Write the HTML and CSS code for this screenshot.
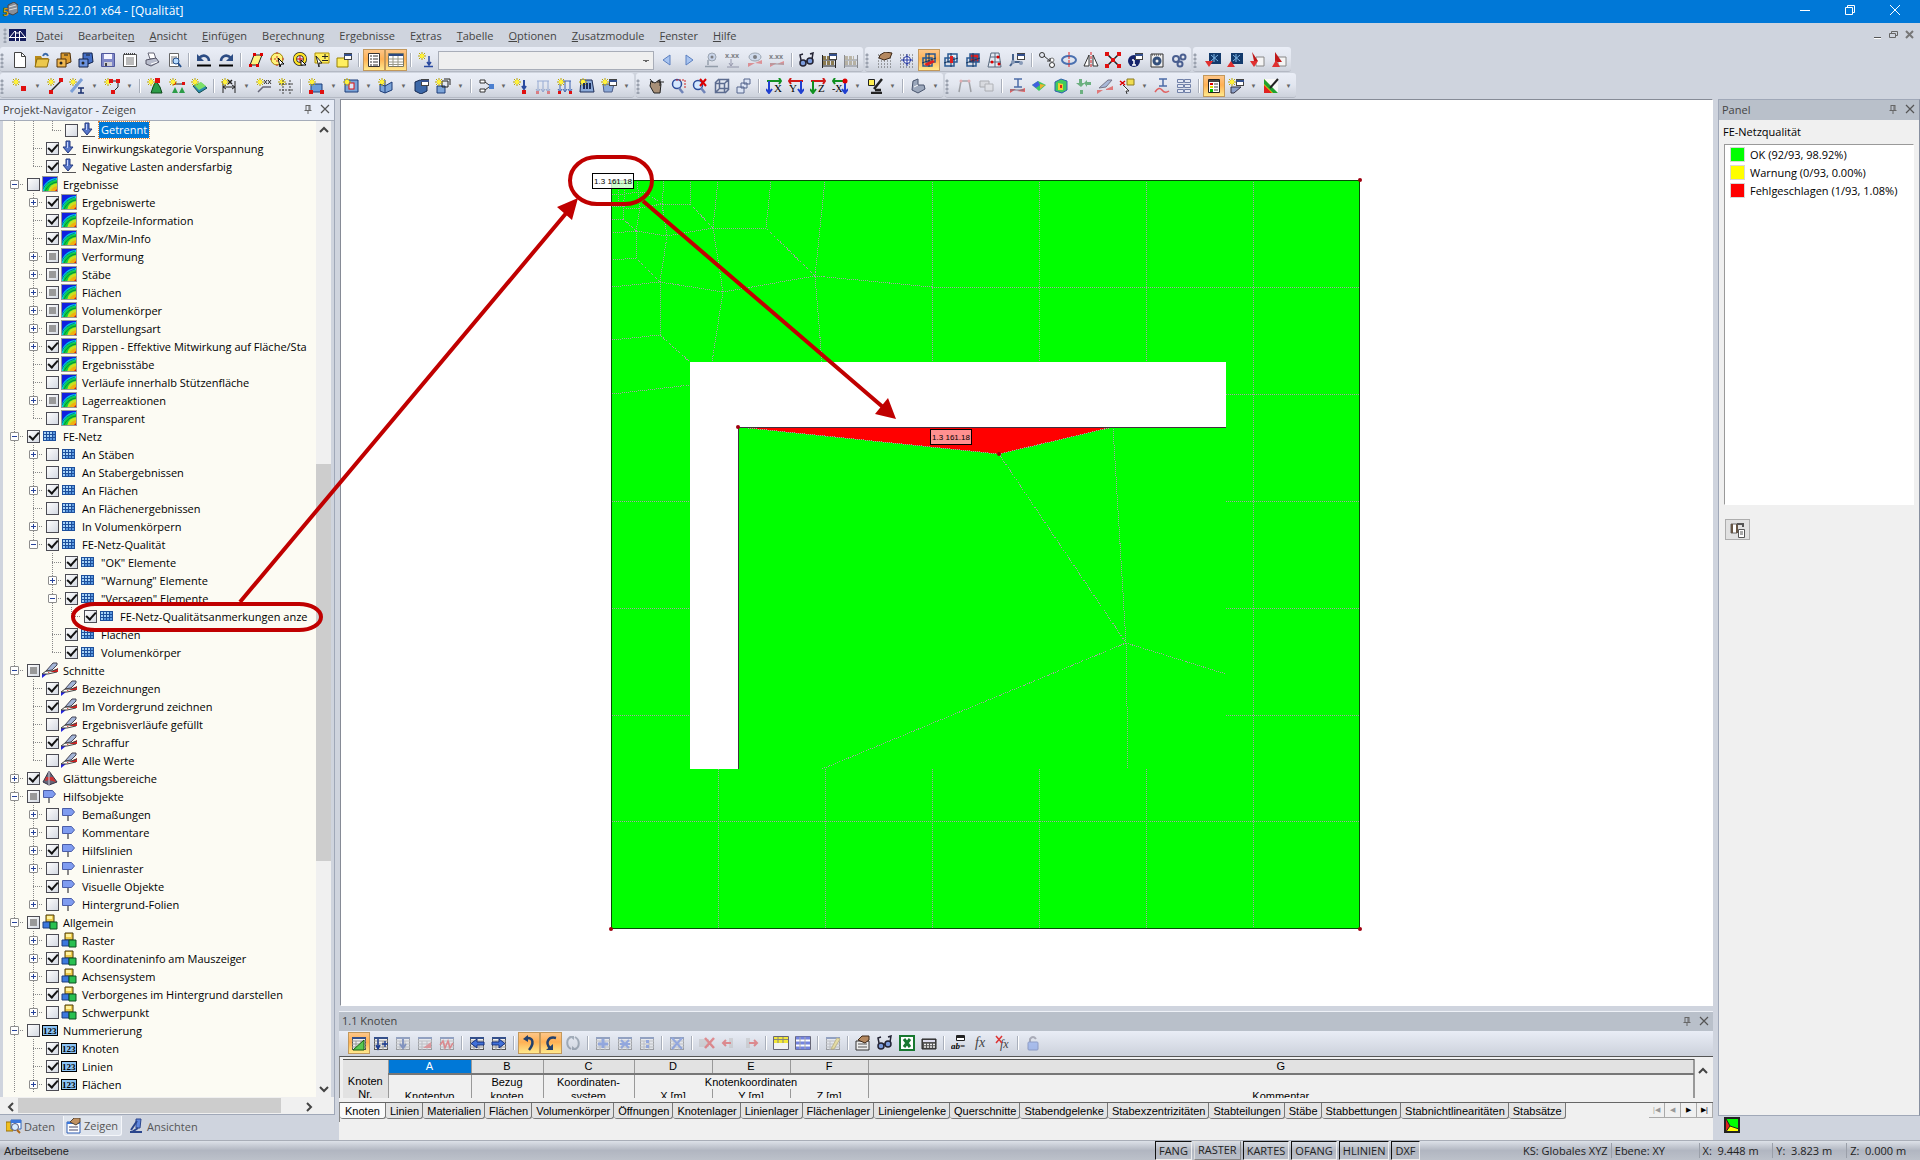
FILE: index.html
```html
<!DOCTYPE html>
<html lang="de">
<head>
    <meta charset="UTF-8">
    <meta name="viewport" content="width=device-width, initial-scale=1.0">
    <title>RFEM 5.22.01 x64 - [Qualität]</title>
    <link rel="stylesheet" href="styles.css">
</head>
<body>
    <div class="app">
        <header class="titlebar">
            <span data-icon="app"></span>
            <h1>RFEM 5.22.01 x64 - [Qualität]</h1>
            <div class="window-buttons">
                <button aria-label="Minimieren"><svg width="12" height="12"><path d="M1 6.500h10" stroke="#fff"/></svg></button>
                <button aria-label="Wiederherstellen"><svg width="12" height="12" fill="none" stroke="#fff"><path d="M1.500 3.500h7v7h-7zM3.500 3.500v-2h7v7h-2"/></svg></button>
                <button aria-label="Schließen"><svg width="12" height="12"><path d="M1 1l10 10M11 1L1 11" stroke="#fff"/></svg></button>
            </div>
        </header>

        <nav class="menubar">
            <i class="grip"></i>
            <svg class="doc-logo" width="17" height="12"><rect width="17" height="12" fill="#141c5c"/><path d="M0 8.500h17M6.500 2v10M10.500 2v10M6 2L1 8M11 2l5 6M6 4h5" stroke="#fff" fill="none"/></svg>
            <a href="#"><u>D</u>atei</a>
            <a href="#">Bearbeite<u>n</u></a>
            <a href="#"><u>A</u>nsicht</a>
            <a href="#"><u>E</u>infügen</a>
            <a href="#">Be<u>r</u>echnung</a>
            <a href="#">Er<u>g</u>ebnisse</a>
            <a href="#">E<u>x</u>tras</a>
            <a href="#"><u>T</u>abelle</a>
            <a href="#"><u>O</u>ptionen</a>
            <a href="#"><u>Z</u>usatzmodule</a>
            <a href="#"><u>F</u>enster</a>
            <a href="#"><u>H</u>ilfe</a>
            <div class="mdi-buttons">
                <button aria-label="Fenster minimieren"><svg width="10" height="10"><path d="M1 7.500h7" stroke="#555"/><path d="M1 8.500h7" stroke="#fff"/></svg></button>
                <button aria-label="Fenster wiederherstellen"><svg width="10" height="10" fill="none" stroke="#666"><path d="M.5 3.500h6v4h-6zM2.500 3V1.500h6v4H7"/></svg></button>
                <button aria-label="Fenster schließen"><svg width="10" height="10"><path d="M1 1l7 7M8 1L1 8" stroke="#777" stroke-width="2"/></svg></button>
            </div>
        </nav>

        <div class="toolbar-row" id="toolbarTop"></div>
        <div class="toolbar-row" id="toolbarBottom"></div>

        <main class="workspace">
            <aside class="navigator">
                <div class="pane">
                    <div class="pane-title active">
                        <h2>Projekt-Navigator - Zeigen</h2>
                        <button aria-label="Anheften" data-icon="pin"></button>
                        <button aria-label="Schließen" data-icon="close"></button>
                    </div>
                    <div class="tree-area">
                        <div class="tree" id="tree"></div>
                        <div class="scroll-v">
                            <button aria-label="Nach oben" data-icon="up"></button>
                            <div class="track"><i class="thumb"></i></div>
                            <button aria-label="Nach unten" data-icon="down"></button>
                        </div>
                    </div>
                    <div class="scroll-h">
                        <button aria-label="Nach links" data-icon="left"></button>
                        <div class="track"><i class="thumb"></i></div>
                        <button aria-label="Nach rechts" data-icon="right"></button>
                    </div>
                </div>
                <div class="nav-tabs">
                    <button><span data-icon="tabData"></span>Daten</button>
                    <button class="selected"><span data-icon="tabShow"></span>Zeigen</button>
                    <button><span data-icon="tabViews"></span>Ansichten</button>
                </div>
            </aside>

            <section class="center">
                <div class="model-view">
                    <svg viewBox="341 100 1371 906" preserveAspectRatio="xMinYMin meet">
                        <rect x="611.5" y="180.500" width="748" height="748" fill="#0f0"/>
                        <path d="M690 362h536v65H738v342h-48z" fill="#fff"/>
                        <path d="M738 427h375l-114 27z" fill="#f00"/>
                        <g class="mesh">
                            <path d="M1253 180v748M1146 180v182M1039 180v182M932 180v182M612 821h748"/>
                            <path d="M718 769v159M825 769v159M932 769v159M1039 769v159M1146 769v159"/>
                            <path d="M612 501h78M612 608h78M612 715h78M612 394l78-9"/>
                            <path d="M1226 394h134M1226 501h134M1226 608h134M1226 715h134M932 287h428"/>
                            <path d="M932 287l-117-11l-92 16l-63-10l-48 5M825 180l-10 96l7 86M815 276l-49-48l5-48M766 228h-53l5-48M713 228l-23-24l1-24M690 204h-28l2-24"/>
                            <path d="M713 228l-46 8l-31-5l-24 2M713 228l10 64l-11 70M660 282v53l-48 5M660 335l30 27M660 282l-24-24l-24 2M636 258v-27M660 282l7-46l-5-32l-22 4l-3-28M636 231l4-23h-15M636 231l-13-12h-11M623 219l2-39M612 194h13l12-2h8l17 12M618 180v25M612 206h13"/>
                            <path d="M738 427l261 27l114-27l13 216l2 126M999 454l127 189l100 31M1126 643L822 769"/>
                        </g>
                        <rect x="611.5" y="180.500" width="748" height="748" fill="none" stroke="#074a07"/>
                        <path d="M1226 427.500H738.500V769" fill="none" stroke="#403040"/>
                        <g fill="#a00010">
                            <circle cx="1360" cy="180" r="2"/><circle cx="611" cy="929" r="2"/><circle cx="1360" cy="929" r="2"/>
                            <circle cx="738" cy="427" r="2"/><circle cx="999" cy="454" r="2"/>
                        </g>
                        <g class="mesh-note">
                            <rect x="592.5" y="173.500" width="41" height="15" fill="#fff" fill-opacity=".8"/>
                            <text x="613" y="184">1.3 161.18</text>
                            <rect x="930.5" y="429.500" width="41" height="15" fill="#ff9090"/>
                            <text x="951" y="440">1.3 161.18</text>
                        </g>
                    </svg>
                </div>

                <div class="table-pane">
                    <div class="pane-title">
                        <h2>1.1 Knoten</h2>
                        <button aria-label="Anheften" data-icon="pin"></button>
                        <button aria-label="Schließen" data-icon="close"></button>
                    </div>
                    <div class="table-tools" id="tableTools"></div>
                    <div class="grid-wrap">
                        <div class="grid-clip">
                            <table>
                                <colgroup>
                                    <col class="w-num"><col class="w-a"><col class="w-b"><col class="w-c"><col class="w-d"><col class="w-d"><col class="w-d"><col>
                                </colgroup>
                                <tr class="letters"><th rowspan="3" class="corner">Knoten<br>Nr.</th><th class="current">A</th><th>B</th><th>C</th><th>D</th><th>E</th><th>F</th><th>G</th></tr>
                                <tr class="heads"><td></td><td>Bezug</td><td>Koordinaten-</td><td colspan="3">Knotenkoordinaten</td><td></td></tr>
                                <tr class="heads"><td>Knotentyp</td><td>knoten</td><td>system</td><td>X [m]</td><td>Y [m]</td><td>Z [m]</td><td>Kommentar</td></tr>
                            </table>
                        </div>
                        <div class="grid-scroll"><button aria-label="Nach oben" data-icon="up"></button></div>
                    </div>
                    <div class="sheet-tabs">
                        <button class="selected">Knoten</button>
                        <button>Linien</button>
                        <button>Materialien</button>
                        <button>Flächen</button>
                        <button>Volumenkörper</button>
                        <button>Öffnungen</button>
                        <button>Knotenlager</button>
                        <button>Linienlager</button>
                        <button>Flächenlager</button>
                        <button>Liniengelenke</button>
                        <button>Querschnitte</button>
                        <button>Stabendgelenke</button>
                        <button>Stabexzentrizitäten</button>
                        <button>Stabteilungen</button>
                        <button>Stäbe</button>
                        <button>Stabbettungen</button>
                        <button>Stabnichtlinearitäten</button>
                        <button>Stabsätze</button>
                        <div class="sheet-nav">
                            <button disabled aria-label="Erste">|◀</button>
                            <button disabled aria-label="Vorherige">◀</button>
                            <button aria-label="Nächste">▶</button>
                            <button aria-label="Letzte">▶|</button>
                        </div>
                    </div>
                </div>
            </section>

            <aside class="panel">
                <div class="pane">
                    <div class="pane-title">
                        <h2>Panel</h2>
                        <button aria-label="Anheften" data-icon="pin"></button>
                        <button aria-label="Schließen" data-icon="close"></button>
                    </div>
                    <h3>FE-Netzqualität</h3>
                    <ul class="legend">
                        <li><i class="ok"></i>OK (92/93, 98.92%)</li>
                        <li><i class="warn"></i>Warnung (0/93, 0.00%)</li>
                        <li><i class="fail"></i>Fehlgeschlagen (1/93, 1.08%)</li>
                    </ul>
                    <button class="panel-option" aria-label="Optionen" data-icon="panelOption"></button>
                </div>
                <div class="panel-tabs"><button aria-label="Farbskala" data-icon="panelTab"></button></div>
            </aside>
        </main>

        <footer class="statusbar">
            <span class="message">Arbeitsebene</span>
            <div class="toggles">
                <button aria-pressed="true">FANG</button>
                <button aria-pressed="false">RASTER</button>
                <button aria-pressed="true">KARTES</button>
                <button aria-pressed="true">OFANG</button>
                <button aria-pressed="true">HLINIEN</button>
                <button aria-pressed="true">DXF</button>
            </div>
            <div class="coords">
                <span class="system">KS: Globales XYZ</span>
                <span class="level">Ebene: XY</span>
                <span>X: &nbsp;9.448 m</span>
                <span>Y: &nbsp;3.823 m</span>
                <span>Z: &nbsp;0.000 m</span>
            </div>
        </footer>

        <!-- callout running across navigator and model view -->
        <svg class="callout" width="1920" height="1160">
            <g fill="none" stroke="#c00000" stroke-width="4">
                <rect x="570" y="157" width="82" height="47" rx="27"/>
                <rect x="73" y="604" width="248" height="26" rx="22"/>
                <path d="M240 602L568 211M643 201L884 408"/>
            </g>
            <path d="M578 198l-6 22l-15-13zM896 419l-21-5l13-16z" fill="#c00000"/>
        </svg>
    </div>
    <script src="script.js"></script>
</body>
</html>
```
FILE: styles.css
```css
* {
    box-sizing: border-box;
}
body {
    margin: 0;
    background: #cfd4de;
    color: #000;
    font: 11px "Open Sans", sans-serif;
}
button {
    margin: 0;
    padding: 0;
    border: none;
    background: none;
    color: inherit;
    font: inherit;
}
h1, h2, h3 {
    margin: 0;
    font: inherit;
}
svg {
    display: block;
    flex: none;
}
.app {
    position: relative;
    display: flex;
    flex-direction: column;
    height: 100vh;
    overflow: hidden;
}

/* title and menu */
.titlebar {
    display: flex;
    align-items: center;
    gap: 5px;
    height: 23px;
    padding: 0 19px 3px 2px;
    background: #0078d7;
    color: #fff;
    font-size: 12px;
}
.window-buttons {
    display: flex;
    gap: 33px;
    margin-left: auto;
}
.menubar {
    display: flex;
    align-items: center;
    height: 24px;
    padding: 0 5px 0 3px;
    color: #444;
}
.menubar a {
    margin-right: 15px;
    color: inherit;
    text-decoration: none;
}
.menubar .grip {
    width: 6px;
}
.doc-logo {
    margin-right: 10px;
}
.mdi-buttons {
    display: flex;
    gap: 6px;
    margin-left: auto;
}

/* toolbars */
.grip {
    width: 9px;
    height: 15px;
    flex: none;
    background: radial-gradient(circle at 2px 2px, #9aa1ae 1px, transparent 2px) 0 0 / 9px 4px;
}
.toolbar-row {
    display: flex;
    gap: 2px;
    height: 26px;
    padding-bottom: 1px;
}
.toolbar {
    display: flex;
    align-items: center;
    padding: 2px 1px 0 0;
    border-radius: 3px;
    background: linear-gradient(#eaeef7, #e2e6ef 50%, #cdd2dc);
    border-bottom: 1px solid #b4b9c4;
}
.tool {
    display: flex;
    align-items: center;
    justify-content: center;
    width: 22px;
    height: 22px;
}
.tool.on {
    border: 1px solid #c2985c;
    background: linear-gradient(#fdc688, #ffb054 45%, #ffe98c);
}
.tool:disabled svg {
    opacity: .45;
}
.drop {
    width: 13px;
    height: 22px;
    color: #666;
    font-size: 6px;
}
.sep {
    width: 2px;
    height: 14px;
    margin: 0 3px;
    background: linear-gradient(90deg, #a9afbb 50%, #fff 50%);
}
.case-select {
    width: 216px;
    height: 19px;
    margin: 0 2px 0 1px;
    border: 1px solid #a8adb8;
    border-radius: 0;
    appearance: none;
    background: linear-gradient(45deg, transparent 50%, #666 50%) right 7px top 8px / 3px 3px no-repeat, linear-gradient(-45deg, transparent 50%, #666 50%) right 4px top 8px / 3px 3px no-repeat, #efefef;
}

/* panes */
.workspace {
    display: flex;
    flex: 1;
    min-height: 0;
}
.pane-title {
    display: flex;
    align-items: center;
    gap: 1px;
    height: 20px;
    padding: 0 1px 2px 3px;
    background: #b9c0ca;
    color: #444;
}
.pane-title h2 {
    flex: 1;
}
.pane-title.active {
    background: #e8edf7;
    height: 21px;
    border-bottom: 1px solid #a5acb9;
}
.navigator {
    display: flex;
    flex-direction: column;
    width: 335px;
}
.navigator .pane {
    display: flex;
    flex-direction: column;
    flex: 1;
    min-height: 0;
    border: 1px solid #a0a8b8;
    border-left: none;
}
.tree-area {
    display: flex;
    flex: 1;
    min-height: 0;
    margin-left: 3px;
}
.tree {
    flex: 1;
    min-width: 0;
    padding-left: 2px;
    overflow: hidden;
    background: #fcfbf3;
}
.scroll-v {
    display: flex;
    flex-direction: column;
    width: 15px;
    margin-right: 3px;
    background: #f0f0f0;
}
.scroll-v button, .scroll-h button {
    display: flex;
    align-items: center;
    justify-content: center;
    width: 15px;
    height: 17px;
}
.scroll-v .track {
    display: grid;
    grid-template-rows: 326fr 396fr 219fr;
    flex: 1;
}
.scroll-v .thumb {
    grid-row: 2;
    background: #cdcdcd;
}
.scroll-h {
    display: flex;
    height: 17px;
    padding: 1px 18px 1px 3px;
    background: #f0f0f0;
}
.scroll-h .track {
    display: grid;
    grid-template-columns: 258fr 20fr;
    flex: 1;
}
.scroll-h .thumb {
    background: #cdcdcd;
}
.row {
    display: flex;
    align-items: center;
    height: 18px;
    white-space: nowrap;
}
.guide {
    display: flex;
    align-items: center;
    justify-content: center;
    flex: none;
    width: 19px;
    height: 18px;
}
.guide.line {
    background: repeating-linear-gradient(#888 0 1px, transparent 1px 2px) 9px 0 / 1px 18px no-repeat;
}
.guide.branch {
    background:
        repeating-linear-gradient(#888 0 1px, transparent 1px 2px) 9px 0 / 1px 18px no-repeat,
        repeating-linear-gradient(90deg, #888 0 1px, transparent 1px 2px) 9px 9px / 10px 1px no-repeat;
}
.guide.branch.last {
    background-size: 1px 9px, 10px 1px;
}
.expander {
    width: 9px;
    height: 9px;
    border: 1px solid #8d8d8d;
    border-radius: 1px;
    background: linear-gradient(#26429a, #26429a) center / 5px 1px no-repeat, #fff;
}
.expander.plus {
    background: linear-gradient(#26429a, #26429a) center / 5px 1px no-repeat, linear-gradient(#26429a, #26429a) center / 1px 5px no-repeat, #fff;
}
.row label {
    display: flex;
    align-items: center;
    padding-left: 3px;
}
.row input {
    display: grid;
    place-items: center;
    width: 13px;
    height: 13px;
    margin: 0 2px 0 0;
    border: 1px solid #4c4c54;
    appearance: none;
    background: linear-gradient(135deg, #fdfdfd, #d5dae3);
}
.row input:checked::after {
    content: "";
    width: 8px;
    height: 4px;
    margin-bottom: 2px;
    border: solid #111;
    border-width: 0 0 2px 2px;
    transform: rotate(-48deg);
}
.row input.mixed::after {
    content: "";
    width: 7px;
    height: 7px;
    background: #999;
}
.row .caption {
    margin-left: 3px;
    padding: 0 2px;
}
.row .caption.selected {
    outline: 1px dotted #e08030;
    background: #0078d7;
    color: #fff;
    line-height: 16px;
}
.nav-tabs {
    display: flex;
    align-items: center;
    height: 25px;
    padding: 0 4px 3px;
    gap: 5px;
    color: #555;
}
.nav-tabs button {
    display: flex;
    align-items: center;
    gap: 2px;
    height: 20px;
    padding: 0 3px 0 2px;
}
.nav-tabs .selected {
    border: 1px solid #f4f6fa;
    border-top: none;
    border-radius: 0 0 3px 3px;
    background: #dfe4ec;
}

/* center column */
.center {
    display: flex;
    flex-direction: column;
    flex: 1;
    min-width: 0;
    padding: 0 5px 0 4px;
}
.model-view {
    flex: 1;
    min-height: 0;
    margin-left: 1px;
    border: 1px solid #868b96;
    border-right-color: #fff;
    border-bottom-color: #fff;
    background: #fff;
    overflow: hidden;
}
.model-view svg {
    width: 100%;
}
.mesh {
    fill: none;
    stroke: #a8a0a8;
    stroke-dasharray: 1 1;
    shape-rendering: crispEdges;
}
.mesh-note rect {
    stroke: #000;
}
.mesh-note text {
    font: 8px "Liberation Sans", sans-serif;
    text-anchor: middle;
}
.table-pane {
    height: 129px;
    margin-top: 5px;
    background: #f0f0f0;
    font-family: "Liberation Sans", sans-serif;
    font-size: 11px;
}
.table-pane .pane-title {
    border-top: 1px solid #eef1f7;
    font-family: "Open Sans", sans-serif;
}
.table-tools {
    display: flex;
    align-items: center;
    height: 25px;
    padding: 0 0 1px 9px;
    background: linear-gradient(#e9edf6, #ccd1db);
}
.grid-wrap {
    display: flex;
    height: 42px;
    padding: 2px 2px 0 3px;
    border-top: 1px solid #555;
    border-left: 1px solid #888;
}
.grid-clip {
    flex: 1;
    overflow: hidden;
    border-top: 1px solid #555;
}
.grid-clip table {
    width: 100%;
    border-collapse: collapse;
    table-layout: fixed;
    text-align: center;
}
.w-num { width: 45px; }
.w-a { width: 83px; }
.w-b { width: 72px; }
.w-c { width: 91px; }
.w-d { width: 78px; }
.grid-clip th, .grid-clip td {
    padding: 0;
    border: 0 solid #999;
    border-right-width: 1px;
    font-weight: normal;
}
.letters th {
    height: 14px;
    border-bottom: 2px solid #777;
    background: #e2e2e2;
    line-height: 11px;
}
.letters .current {
    background: #0078d7;
    color: #fff;
}
.letters .corner {
    padding-top: 15px;
    border-bottom: none;
    line-height: 13px;
    vertical-align: top;
}
.heads td {
    height: 14px;
    line-height: 14px;
}
.heads:last-child td {
    height: 18px;
    line-height: 14px;
    vertical-align: top;
}
.grid-scroll {
    width: 17px;
    padding: 4px 0;
    border-left: 1px solid #999;
}
.sheet-tabs {
    display: flex;
    height: 20px;
    margin-top: 4px;
    border-top: 1px solid #666;
    border-left: 1px solid #888;
}
.sheet-tabs > button {
    height: 16px;
    padding: 0 3px 0 4px;
    border: 1px solid #777;
    border-width: 0 1px 1px 0;
    border-radius: 0 0 3px 3px;
    background: #e4e4e4;
    white-space: nowrap;
}
.sheet-tabs > .selected {
    padding: 0 5px;
    background: #fafafa;
}
.sheet-nav {
    display: flex;
    margin-left: auto;
}
.sheet-nav button {
    width: 16px;
    height: 15px;
    border: 1px solid #aaa;
    border-width: 0 1px 1px 0;
    font-size: 7px;
}
.sheet-nav button:disabled {
    color: #999;
}

/* right panel */
.panel {
    display: flex;
    flex-direction: column;
    width: 202px;
}
.panel .pane {
    flex: 1;
    border: 1px solid #a0a8b8;
    border-right-color: #8890a0;
    background: #f0f0f0;
}
.panel h3 {
    padding: 5px 4px;
    line-height: 14px;
}
.legend {
    height: 361px;
    margin: 0 5px;
    padding: 0 5px;
    border: 1px solid #999;
    border-right-color: #fff;
    border-bottom-color: #fff;
    background: #fff;
    list-style: none;
}
.legend li {
    display: flex;
    align-items: center;
    gap: 5px;
    height: 18px;
}
.legend i {
    width: 15px;
    height: 15px;
    border: 1px solid #d8d8d8;
}
.ok { background: #0f0; }
.warn { background: #ff0; }
.fail { background: #f00; }
.panel-option {
    display: flex;
    align-items: center;
    justify-content: center;
    width: 25px;
    height: 21px;
    margin: 14px 6px;
    border: 1px solid #adadad;
    background: #e1e1e1;
}
.panel-tabs {
    height: 24px;
    padding: 1px 6px;
}

/* status bar */
.statusbar {
    display: flex;
    align-items: center;
    height: 20px;
    border-top: 1px solid #a9aeb8;
    background: linear-gradient(#dde1e8, #b1b6c1 50%, #bcc1ca);
    color: #222;
    white-space: nowrap;
}
.message {
    flex: 1154;
    padding-left: 4px;
    font: 11px "Liberation Sans", sans-serif;
}
.toggles {
    display: flex;
    flex: 366;
    gap: 2px;
}
.toggles button {
    height: 19px;
    padding: 0 3px;
    border: 1px solid #111;
    border-right-color: #eee;
    border-bottom-color: #eee;
}
.toggles [aria-pressed="false"] {
    border-color: #ddd #888 #888 #ddd;
    padding-bottom: 3px;
}
.coords {
    display: flex;
    width: 400px;
}
.coords span {
    width: 74px;
    padding-left: 3px;
    border-left: 1px solid #9a9fa9;
}
.coords .system {
    width: 91px;
    border-left: none;
}
.coords .level {
    width: 88px;
}
.callout {
    position: absolute;
    top: 0;
    left: 0;
    pointer-events: none;
}
```
FILE: script.js
```js
// all icons are drawn on a 16 x 16 grid
const star = '<path d="M4 0v8M0 4h8M1 1l6 6M7 1L1 7" stroke="#b9a400"/><circle cx="4" cy="4" r="2.200" fill="#fff23c"/>';
const dots = '<path d="M1 3h14M1 6h14M1 9h14M1 12h14M1 15h14" stroke="#555" stroke-dasharray="1 2"/>';
const grid = '<rect x="1.5" y="2.500" width="13" height="12" fill="#eee" stroke="#555"/><path d="M1 6h14M1 9h14M1 12h14M5 6v9M10 6v9" stroke="#999"/><path d="M1 2h14v2H1z" fill="#34508c"/>';
const sheet = '<path d="M3.500 1.500h9v13h-9z" fill="#fff" stroke="#666"/><path d="M5 5h6M5 7h6M5 9h6M5 11h6" stroke="#777"/>';
const axes = (a, b, t) => `<path d="M1 3h14M13 0l2 3-2 3" stroke="${a}" stroke-width="2" fill="none"/><path d="M3 3v11M0 11l3 4 3-4" stroke="${b}" stroke-width="2" fill="none"/><text x="8" y="14" font-size="11" font-family="Liberation Serif">${t}</text>`;
const abacus = '<path d="M1.500 3v13M14.500 3v13M1 8h14M1 14h14" stroke="#222"/><path d="M2 6h9M2 11h12" stroke="#8a7a50" stroke-width="4" stroke-dasharray="3 1"/>';
const win = '<rect x="8.5" y="1.500" width="7" height="6" fill="#fff" stroke="#444"/><path d="M8 2h8v2H8z" fill="#34508c"/>';
const loadWave = '<path d="M3 3v10M8 3v10M13 3v10M1 11l2 3 2-3M6 11l2 3 2-3M11 11l2 3 2-3M2 3h12" stroke="#3d62b0" fill="none"/>';
const cubeAxes = c => `<path d="M5 2h9v8H5z" fill="${c}" stroke="#2a5a92" stroke-width="1.500"/><path d="M2 6h9v8H2z" fill="none" stroke="#2a5a92" stroke-width="1.500"/><path d="M1 11l14-5M8 1v14" stroke="#17375e"/>`;

const icons = {
    app: '<path d="M6 3l6-3 4 3v7l-5 3-5-2z" fill="#8a8f98" stroke="#444"/><path d="M7 5l7-2M7 8l8-2" stroke="#ddd"/><text x="1" y="14" font-size="10" font-weight="bold" fill="#ffc21a" stroke="#553c00" stroke-width=".5">5</text>',
    pin: '<path d="M6 4v5M10 4v5M6 4.500h4M4.500 9.500h7M8 10v3M9 4v5" stroke="#666"/>',
    close: '<path d="M4 4l8 8M12 4l-8 8" stroke="#555" stroke-width="1.200"/>',
    up: '<path d="M4 10l4-4 4 4" fill="none" stroke="#444" stroke-width="2"/>',
    down: '<path d="M4 6l4 4 4-4" fill="none" stroke="#444" stroke-width="2"/>',
    left: '<path d="M10 4L6 8l4 4" fill="none" stroke="#444" stroke-width="2"/>',
    right: '<path d="M6 4l4 4-4 4" fill="none" stroke="#444" stroke-width="2"/>',

    // tree
    load: '<path d="M1 14.500h14" stroke="#555"/><path d="M5 1h4v6h3l-5 6-5-6h3z" fill="#5676c8" stroke="#253a80"/><path d="M6.500 2v6" stroke="#c8d6ff"/>',
    result: '<rect width="16" height="16" fill="#1020e0"/><path d="M0 16A15 15 0 0 1 16 2V16z" fill="#00c8f0"/><path d="M2 16A13 13 0 0 1 16 4V16z" fill="#10d040"/><path d="M6 16A10 10 0 0 1 16 7V16z" fill="#c8e020"/><path d="M8 16A9 9 0 0 1 16 10V16z" fill="#f0b010"/><path d="M12 16l4-4v4z" fill="#e01010"/><path d="M1 13Q4 6 14 3M3 15Q7 7 15 6" stroke="#043" stroke-width=".5" fill="none"/><rect x=".5" y=".5" width="15" height="15" fill="none" stroke="#999"/>',
    mesh: '<rect x="1" y="3" width="13" height="10" fill="#1d4f9c"/><path d="M2 4h2v2H2zM5 4h2v2H5zM8 4h2v2H8zM2 7h2v2H2zM5 7h2v2H5zM8 7h2v2H8zM2 10h2v2H2z" fill="#a8d4f8"/><path d="M11 4h2v2h-2zM11 7h2v2h-2zM5 10h2v2H5zM8 10h2v2H8zM11 10h2v2h-2z" fill="#5c9ae0"/>',
    section: '<path d="M6 11l10-5v4H6z" fill="#d22"/><path d="M0 16v-4h5z" fill="#22d"/><path d="M4 9L11 1h4v2l-5 5z" fill="#a4b6d8" stroke="#445"/><path d="M0 12l4-3h6l6-2M0 12h6l9-2" stroke="#444" fill="none"/>',
    smooth: '<path d="M7 1l-6 11 6 3 8-3z" fill="#667" stroke="#334"/><path d="M4 7h7l3 5-7-2-4 1z" fill="#c33"/><path d="M7 1v14" stroke="#ccd"/>',
    sign: '<path d="M7 3v12" stroke="#888" stroke-width="2"/><path d="M1.500 2.500h9l3 3.500-3 3.500h-9z" fill="#7f9cf0" stroke="#4a5da8"/>',
    blocks: '<path d="M4 1h8v7H4z" fill="#ecc94a" stroke="#4a3a08"/><path d="M1 8h7v6H1z" fill="#3c78dc" stroke="#1c3c80"/><path d="M8 8h7v7H8z" fill="#28c050" stroke="#0c4c20"/><path d="M5 2h5v3H5z" fill="#fff3a0"/>',
    numbers: '<rect x=".5" y="3.500" width="15" height="10" fill="#8cc4f4" stroke="#000"/><text x="1" y="12" font-size="9" font-weight="bold" font-family="Liberation Serif">123</text>',
    tabData: '<path d="M0 4h7v9H0z" fill="#f0c020" stroke="#98700c"/><path d="M5 2h10v9H5z" fill="#fff" stroke="#3264b4"/><path d="M5 2h10v3H5z" fill="#3c78dc"/><circle cx="9" cy="9" r="3.500" fill="#d8ecff" stroke="#557"/><path d="M11 12l3 3" stroke="#b06818" stroke-width="2"/>',
    tabShow: '<path d="M1 4h13v11H1z" fill="#fff" stroke="#2c5cb4"/><path d="M1 4h13v2H1z" fill="#3c78dc"/><path d="M3 9h9M3 12h9" stroke="#446"/><path d="M4 4l4-4h6v4l-4 3z" fill="#c09060" stroke="#543"/>',
    tabViews: '<path d="M7 1h5l-1 9H7z" fill="#5f86dc" stroke="#2a458c"/><path d="M8 3L2 12M1 14h12M3 14l6-4" stroke="#2a458c" stroke-width="2"/>',

    // standard toolbar
    page: '<path d="M2.500.5h7l4 4v11h-11z" fill="#fff" stroke="#444"/><path d="M9.500 1v3.500h4" fill="none" stroke="#444"/>',
    folder: '<path d="M1 4h6l1 2h6v8H1z" fill="#b88a18"/><path d="M3 7h12l-2 8H1z" fill="#ecc84c" stroke="#8a6a10"/><path d="M9 4c1-3 4-3 5 0" stroke="#3a6aa8" stroke-width="2" fill="none"/>',
    boxOrange: '<path d="M5 1h9l1 9-5 2H5z" fill="#dc9c30" stroke="#503008"/><path d="M1 7h9v8H1z" fill="#f0b850" stroke="#503008"/><circle cx="5" cy="11" r="1.500" fill="#222"/><path d="M8 3h4" stroke="#222"/>',
    boxBlue: '<path d="M5 1h9l1 9-5 2H5z" fill="#4470c8" stroke="#102048"/><path d="M1 7h9v8H1z" fill="#6c94e0" stroke="#102048"/><circle cx="5" cy="11" r="1.500" fill="#222"/><path d="M8 3h4" stroke="#222"/>',
    save: '<path d="M1.500 1.500h13v13h-13z" fill="#8088c8" stroke="#50589c"/><path d="M4 2h8v5H4z" fill="#f4f4ff"/><path d="M4 10h8v4H4z" fill="#d0d0d8"/><path d="M5 11h2v3H5z" fill="#444"/>',
    notepad: '<path d="M1.500 2.500h13v12h-13z" fill="#fff" stroke="#555"/><path d="M4 6h8M4 8h8M4 10h8M4 12h8" stroke="#777"/><path d="M2 2h12" stroke="#444" stroke-width="2" stroke-dasharray="1 1"/>',
    print: '<path d="M4 1l6 0 2 6H6z" fill="#fff" stroke="#667"/><path d="M2 8l10-2 3 4-8 4-5-2z" fill="#b8bccc" stroke="#556"/><path d="M7 12l6-2" stroke="#fff"/>',
    preview: sheet + '<circle cx="10" cy="9" r="3" fill="#b8dcff" stroke="#26508c"/><path d="M12 11l3 4" stroke="#26508c" stroke-width="2"/>',
    undo: '<path d="M3 6c5-5 10-1 10 3" fill="none" stroke="#2c4c84" stroke-width="2.500"/><path d="M1 2v7h7z" fill="#2c4c84"/><path d="M1 13.500h14" stroke="#000" stroke-width="2"/>',
    redo: '<path d="M13 6C8 1 3 5 3 9" fill="none" stroke="#2c4c84" stroke-width="2.500"/><path d="M15 2v7H8z" fill="#2c4c84"/><path d="M1 13.500h14" stroke="#000" stroke-width="2"/>',
    selPoly: '<path d="M2 13L6 3h8l-4 10z" fill="#fff480" stroke="#222"/><path d="M1 12h3v3H1zM5 1h3v3H5zM12 1h3v3h-3zM8 12h3v3H8z" fill="#d00"/>',
    selCircle: '<circle cx="7" cy="7" r="6" fill="#fff27a" stroke="#a08000"/><path d="M7 0v14M0 7h14" stroke="#c33" stroke-dasharray="2 2"/><path d="M8 6l6 6-3 0-1 3z" fill="#fff" stroke="#000"/>',
    selRing: '<circle cx="8" cy="7" r="5" fill="none" stroke="#222" stroke-width="4"/><circle cx="8" cy="7" r="5" fill="none" stroke="#ffe428" stroke-width="2.500"/><path d="M8 4v6M5 7h6" stroke="#d00"/><path d="M9 8l5 5h-5z" fill="#fff" stroke="#000"/>',
    selPlus: '<path d="M1 1h14v10H1z" fill="#ffef60" stroke="#b09000"/><path d="M11 2v5M8 4.500h6M8 8.500h6" stroke="#222"/><path d="M2 4l6 7-3 0 0 4z" fill="#fff" stroke="#222"/>',
    selWin: '<path d="M1 6h11v9H1z" fill="#ffef60" stroke="#988000"/>' + win,
    listView: '<path d="M2.500 1.500h11v13h-11z" fill="#fff" stroke="#333"/><path d="M4 4h2M4 7h2M4 10h2M4 13h2M7 4h5M7 7h5M7 10h5M7 13h5" stroke="#333"/>',
    tableView: '<path d="M.5 1.500h15v13H.5z" fill="#fff" stroke="#776"/><path d="M1 2h14v2H1z" fill="#2c4880"/><path d="M1 7h14M1 10h14M1 12.500h14M5 4v10M10 4v10" stroke="#998"/>',
    newLoad: star + '<path d="M11 4v8M9 10l2 3 2-3M6 14.500h9" stroke="#2a4aa0" stroke-width="1.500" fill="none"/>',
    prev: '<path d="M11 3v10L4 8z" fill="#a8c4f0" stroke="#5c80c0"/>',
    next: '<path d="M5 3v10l7-5z" fill="#a8c4f0" stroke="#5c80c0"/>',
    showLoad: '<circle cx="9" cy="5" r="4" fill="#a8bce0" stroke="#456"/><circle cx="9" cy="5" r="1.500"/><path d="M5 8v5M2 14.500h13" stroke="#456" stroke-width="1.500"/>',
    loadVal: '<text x="0" y="6" font-size="7" font-weight="bold">x.xx</text><path d="M6 7v6M4 11l2 3 2-3M2 15h12" stroke="#446" fill="none"/>',
    showRes: '<ellipse cx="8" cy="5" rx="6" ry="4" fill="#b8cce8" stroke="#456"/><circle cx="8" cy="5" r="2"/><path d="M1 15v-4l7 0zM8 11l7-3v4z" fill="#d33"/>',
    resVal: '<text x="0" y="7" font-size="7" font-weight="bold">x.xx</text><path d="M1 15v-4l7 0zM8 12l7-3v4z" fill="#d33"/><path d="M1 12h14" stroke="#555"/>',
    glasses: '<circle cx="4" cy="11" r="3" fill="#7c9cdc" stroke="#223" stroke-width="1.500"/><circle cx="11" cy="9" r="3" fill="#7c9cdc" stroke="#223" stroke-width="1.500"/><path d="M2 8L1 3l3-1M13 7l1-6-3 1M6 10l2-1" stroke="#223" stroke-width="1.500" fill="none"/>',
    abacusWin: abacus + win,
    abacus: abacus,
    handGrid: dots + '<path d="M3 3l5-3 7 1-2 5-6 2-5-2z" fill="#b48860" stroke="#3c2818"/>',
    gridAim: dots + '<circle cx="8" cy="8" r="3.500" fill="#fff" stroke="#1c30a0"/><path d="M8 2v12M2 8h12" stroke="#1c30a0"/>',
    plane1: cubeAxes('none') + '<path d="M3 12l9-4 2 2-8 4z" fill="#e02020"/>',
    plane2: cubeAxes('none') + '<path d="M7 4h3v7H7z" fill="#e02020"/>',
    plane3: cubeAxes('#e02020'),
    meshPlane: '<path d="M4 1L1 15h13L12 1zM8 1v14M3 5h10M2 10h12" fill="#e4eaf4" stroke="#58687c"/><circle cx="5" cy="10" r="1.500" fill="#d00"/><circle cx="11" cy="5" r="1.500" fill="#d00"/><circle cx="12" cy="12" r="1.500" fill="#d00"/>',
    nodeWin: '<path d="M4 2v8l-3 4M4 10h7" stroke="#46628c" stroke-width="2" fill="none"/><circle cx="4" cy="10" r="2" fill="#889ab8"/><circle cx="12" cy="11" r="2" fill="#889ab8"/>' + win,
    copy: '<circle cx="3" cy="3" r="2.500" fill="none" stroke="#333"/><circle cx="13" cy="13" r="2.500" fill="#fff" stroke="#333"/><circle cx="13" cy="8" r="2" fill="#fff" stroke="#777"/><path d="M5 4l6 5M8 9h3V6" stroke="#333" fill="none"/>',
    rotate: '<ellipse cx="8" cy="8" rx="7" ry="4" fill="none" stroke="#4a70b0" stroke-width="2"/><path d="M8 0v16" stroke="#d22" stroke-dasharray="3 1"/>',
    mirror: '<path d="M1 14h5V3zM15 14h-5V3z" fill="#fff" stroke="#333"/><path d="M8 0v16" stroke="#d22" stroke-dasharray="3 1"/>',
    cross: '<path d="M2 2l12 12M14 2L2 14" stroke="#222" stroke-width="1.500"/><path d="M0 0h4v4H0zM12 0h4v4h-4zM0 12h4v4H0zM12 12h4v4h-4zM6 6h4v4H6z" fill="#e01010"/>',
    info: '<circle cx="7" cy="9" r="6" fill="#16246c"/><path d="M7 8v5M5 8h2M5 13h4" stroke="#fff" stroke-width="1.500"/>' + win,
    gearPage: '<path d="M2 2h12v13H2z" fill="#eee" stroke="#333"/><circle cx="8" cy="9" r="3" fill="none" stroke="#33507c" stroke-width="3"/><path d="M3 3h10" stroke="#333" stroke-dasharray="1 1"/>',
    gears: '<g fill="none" stroke="#4a5f90" stroke-width="2"><circle cx="5" cy="7" r="3"/><circle cx="12" cy="5" r="2.500"/><circle cx="9" cy="12" r="2.500"/></g>',
    modBlue1: '<path d="M4 1h12v11H4z" fill="#123a6c"/><path d="M6 3l7 6M13 3L6 9M9 2v8" stroke="#7cb4e4"/><path d="M0 9h8l-4 6z" fill="#e03030"/>',
    modBlue2: '<path d="M4 1h12v11H4z" fill="#123a6c"/><path d="M6 3l7 6M13 3L6 9M9 2v8" stroke="#7cb4e4"/><path d="M0 15h8l-4-6z" fill="#e03030"/>',
    modRed1: '<path d="M7 5h8v9H7z" fill="#f4f4f4" stroke="#888"/><path d="M3 0l6 9H5z" fill="#c01818"/><path d="M1 9h8l-4 6z" fill="#e03030"/>',
    modRed2: '<path d="M7 5h8v9H7z" fill="#f4f4f4" stroke="#888"/><path d="M4 0l7 10H4z" fill="#c01818"/><path d="M1 15h8L5 8z" fill="#e03030"/>',

    // insert and view toolbar
    newNode: star + '<path d="M9 8h5v5H9z" fill="#e01010"/>',
    newLine: star + '<path d="M4 13L14 3" stroke="#222" stroke-width="1.500"/><path d="M2 12h4v4H2zM12 0h4v4h-4z" fill="#e01010"/>',
    newMember: star + '<path d="M2 14L13 1" stroke="#7ca0d8" stroke-width="3"/><path d="M9 10h6M12 10v5M9 15h6" stroke="#1a3070" stroke-width="1.500"/>',
    newPolyline: star + '<path d="M6 3h8v6l-5 5" fill="none" stroke="#222"/><path d="M5 1h4v4H5zM12 1h4v4h-4zM7 12h4v4H7z" fill="#e01010"/>',
    newSupport: '<path d="M9 3l4 6 2 6H4l2-6z" fill="#2c9c48" stroke="#0c4818"/><path d="M8 0h5v5H8z" fill="#e01010"/>' + star,
    newLineSupport: '<path d="M5 6h9" stroke="#222"/><path d="M4 4h3v3H4zM13 4h3v3h-3z" fill="#e01010"/><path d="M3 15l3-6 3 6zM10 15l3-6 3 6z" fill="#2c9c48"/>' + star,
    newSurface: '<path d="M2 8l8-3 6 5-8 5z" fill="#2c8cb0" stroke="#145050"/><path d="M3 7l7-3 5 4-7 4z" fill="#7ce068"/>' + star,
    newDim: '<path d="M2 3v12M14 3v12M2 9h12M5 7L2 9l3 2M11 7l3 2-3 2" stroke="#222" fill="none"/><path d="M7 2l4 4M11 2L7 6" stroke="#222" stroke-width="1.500"/>' + star,
    newComment: star + '<path d="M8 2l3 4M11 2l-3 4M12 2l3 4M15 2l-3 4" stroke="#333"/><path d="M2 14l5-5h8" stroke="#667" stroke-width="1.500" fill="none"/>',
    newGuides: star + '<path d="M5 2v14M12 2v14M1 6h15M1 12h15" stroke="#444" stroke-dasharray="2 1"/>',
    newRect: '<path d="M3 6h11v8H3z" fill="#6a9cd8" stroke="#1c3c78"/><path d="M1 12h4v4H1zM12 12h4v4h-4z" fill="#e01010"/>' + star,
    newOpening: '<path d="M2 2h13v12H2z" fill="#7ca4d8" stroke="#1c3c78"/><rect x="6" y="5" width="5" height="6" fill="#dde8f8" stroke="#e01010"/>' + star,
    newShell: '<path d="M2 6l5 2 7-4v8l-7 3-5-2z" fill="#7ca4d8" stroke="#1c3c78"/><path d="M7 2v13" stroke="#1c3c78"/>' + star,
    newSolid: '<path d="M2 4l5-2 7 2v9l-6 3-6-3z" fill="#3c68a8" stroke="#142850"/>' + win,
    newCopy: '<path d="M2 8h8v7H2z" fill="#7ca4d8" stroke="#1c3c78"/><path d="M7 3h6v6H7zM9 1h6v6" fill="none" stroke="#222"/>' + star,
    flow: '<path d="M2 2h5v3H2zM2 11h5v3H2z" fill="#fff" stroke="#333"/><path d="M7 4l4 3M7 12l4-3" stroke="#333"/><path d="M11 6h5v5h-5z" fill="#4c80d0"/>',
    newNodalLoad: star + '<path d="M11 2v9M9 8l2 3 2-3" stroke="#2a4aa0" stroke-width="2" fill="none"/><path d="M9 12h4v4H9z" fill="#e01010"/>',
    memberLoad: loadWave + '<path d="M1 13h3v3H1zM12 13h3v3h-3z" fill="#e01010"/>',
    lineLoad: loadWave + star + '<path d="M1 13h3v3H1zM12 13h3v3h-3z" fill="#e01010"/>',
    surfaceLoad: '<path d="M2 2h11l2 12H1z" fill="#8caad8" stroke="#1c2c58"/>' + star + '<path d="M5 5v6M8 5v6M11 5v6" stroke="#1c2c58" stroke-width="2"/>',
    loadWin: '<path d="M2 6h11l-2 8H3z" fill="#8caad8" stroke="#4c5c88"/>' + star + win,
    handMove: '<path d="M3 3l4 2 4-3 2 4-1 9H6L2 8z" fill="#a89078" stroke="#222"/><path d="M12 1v7M9 4h7M2 1l3 4" stroke="#222"/>',
    zoomWin: '<circle cx="7" cy="6" r="4.500" fill="#d4e8ff" stroke="#2c4c9c" stroke-width="1.500"/><path d="M9 10l4 5" stroke="#7084b8" stroke-width="2.500"/><path d="M6 2h9v8" stroke="#c22" fill="none" stroke-dasharray="2 1"/>',
    zoomX: '<circle cx="6" cy="7" r="4.500" fill="#d4e8ff" stroke="#2c4c9c" stroke-width="1.500"/><path d="M9 10l4 5" stroke="#7084b8" stroke-width="2.500"/><path d="M8 1l6 7M14 1L8 8" stroke="#d00" stroke-width="2"/>',
    wireCube: '<path d="M1.500 5.500h9v9h-9zM5.500 1.500h9v9h-9zM1 5l4-4M11 5l4-4M1 15l4-4M11 15l4-4" fill="none" stroke="#5c6c90" stroke-width="1.500"/>',
    cubes: '<path d="M8 1h6v5H8zM5 5h6v5H5zM1 9h7v6H1z" fill="#dce4f4" stroke="#54648c"/>',
    viewX: axes('#109020', '#2040d0', 'X'),
    viewY: '<path d="M1 3h14M3 0L1 3l2 3" stroke="#d01818" stroke-width="2" fill="none"/><path d="M13 3v11M10 11l3 4 3-4" stroke="#2040d0" stroke-width="2" fill="none"/><text x="1" y="14" font-size="11" font-family="Liberation Serif">Y</text>',
    viewZ: axes('#d01818', '#109020', 'Z'),
    viewMX: '<path d="M1 3h12M3 0L1 3l2 3" stroke="#109020" stroke-width="2" fill="none"/><path d="M13 3v11M10 11l3 4 3-4" stroke="#2040d0" stroke-width="2" fill="none"/><circle cx="13" cy="3" r="2.500" fill="#d00"/><text x="0" y="14" font-size="10" font-family="Liberation Serif">-X</text>',
    render: '<path d="M1.500 1.500h6v6h-6z" fill="#ffef50" stroke="#222"/><path d="M15 1L7 11M4 15h11M8 12l6 0" stroke="#222" stroke-width="2.500"/>',
    solidL: '<path d="M3 3l5-2v6l6 0 1 4-7 4-6-3z" fill="#9ca8bc" stroke="#48546c"/><path d="M8 7l-4 2" stroke="#fff"/>',
    frame: '<path d="M2 14L4 3h8l2 11" fill="none" stroke="#555" stroke-width="1.500"/><circle cx="4" cy="3" r="1.500" fill="#d66"/><circle cx="12" cy="3" r="1.500" fill="#d66"/>',
    tag: '<path d="M1 3h9v6H1z" fill="#ccc" stroke="#666"/><path d="M6 6h8v7H6z" fill="#ddd" stroke="#777"/>',
    iBeam: '<path d="M5 1h8M9 1v8M5 9h8" stroke="#4c6ca8" stroke-width="1.500"/><path d="M1 15v-4h6zM8 13l8-3v4z" fill="#e06060"/><path d="M1 12h14" stroke="#778"/>',
    plate: '<path d="M1 7l6-4 8 4-7 6z" fill="#40c860"/><path d="M1 7l6-4 2 4-4 3z" fill="#4060e0"/><path d="M9 6l5 1-5 4z" fill="#f0b030"/>',
    solidRes: '<path d="M2 4l6-3 6 2v9l-5 3-7-2z" fill="#40c860" stroke="#3060b0"/><path d="M5 5l5 1v6H5z" fill="#f0d030"/><path d="M7 7h2v3H7z" fill="#e02020"/>',
    greenArrows: '<path d="M4 1h3v4h3l-4 4-5-4h3zM5 16v-4h3v4zM9 5l3-3v2h4v3h-4v2z" fill="#6cb080"/>',
    sectionRes: '<path d="M0 16v-4l6 0zM9 11l7-3v4H9z" fill="#e07878"/><path d="M2 10L11 2h4l-6 7z" fill="#a8b8d8" stroke="#778"/>',
    pick: '<path d="M8 1h7v6H8z" fill="#f0dc50" stroke="#8a7a20"/><path d="M1 3l5 4M6 3L1 7" stroke="#d00" stroke-width="1.500"/><path d="M4 7l6 6H7l1 3" fill="#fff" stroke="#333"/>',
    iBeam2: '<path d="M5 1h8M9 1v7M5 8h8" stroke="#4c6ca8" stroke-width="1.500"/><path d="M1 14q4-6 7-2t7 1" stroke="#e06060" fill="none" stroke-width="1.500"/>',
    bricks: '<path d="M1.500 1.500h6v3h-6zM8.500 1.500h6v3h-6zM1.500 6.500h6v3h-6zM8.500 6.500h6v3h-6zM1.500 11.500h6v3h-6zM8.500 11.500h6v3h-6z" fill="#e4e8f4" stroke="#7080a8"/>',
    colorList: '<path d="M2.500 1.500h11v13h-11z" fill="#fff" stroke="#222"/><path d="M3 3h10" stroke="#444" stroke-width="2"/><path d="M4 5h3v2H4z" fill="#d00"/><path d="M4 8h3v2H4z" fill="#dd0"/><path d="M4 11h3v3H4z" fill="#0b0"/><path d="M8 6h4M8 9h4M8 12h4" stroke="#444"/>',
    sectionWin: '<path d="M3 9h10l-7 6H3z" fill="#8ca0c8" stroke="#334"/>' + star + win,
    colorTri: '<path d="M1 1h14v14H1z" fill="#f8f8f8"/><path d="M1 1l13 14H1z" fill="#e8e000"/><path d="M1 7l8 8H1z" fill="#e02020"/><path d="M1 1l14 14h-5L1 6z" fill="#20a030"/><path d="M15 1L7 10" stroke="#222" stroke-width="2"/>',

    // table toolbar
    tEdit: grid + '<path d="M2 15L13 5v10z" fill="#58c850" stroke="#186010"/>',
    tInsert: grid + '<path d="M5 4v9M3 10l2 4 2-4M9 9h6M12 6v6" stroke="#1c3c90" stroke-width="1.500" fill="none"/>',
    tDown: grid + '<path d="M8 4v8M5 9l3 4 3-4" stroke="#1c3c90" stroke-width="2" fill="none"/>',
    tLine: grid + '<path d="M1 13l5 0 8-6v6z" fill="#d44"/>',
    tWave: grid + '<path d="M1 10l3-4 2 7 3-7 2 7 3-5" stroke="#d22" stroke-width="1.500" fill="none"/>',
    tLeft: grid + '<path d="M15 7v3H8v3L2 8.500 8 4v3z" fill="#4070d8" stroke="#16307c"/>',
    tRight: grid + '<path d="M1 7v3h7v3l6-4.500L8 4v3z" fill="#4070d8" stroke="#16307c"/>',
    jumpBack: '<path d="M5 3c8-1 8 6 3 12" fill="none" stroke="#24406c" stroke-width="2.500"/><path d="M7 0v7L2 4z" fill="#24406c"/>',
    jumpFwd: '<path d="M13 3C5 1 2 8 7 13" fill="none" stroke="#24406c" stroke-width="2.500"/><path d="M3 15h7V9z" fill="#24406c"/>',
    refresh: '<path d="M6 2C1 4 1 11 6 14M10 14c5-2 5-9 0-12" fill="none" stroke="#567" stroke-width="2"/><path d="M4 1h5v4zM12 15H7v-4z" fill="#567"/>',
    tPlus: grid + '<path d="M8 4v9M3 9h10" stroke="#3c64d0" stroke-width="3"/>',
    tStar: grid + '<path d="M4 5l8 8M12 5l-8 8M3 9h10" stroke="#3c64d0" stroke-width="2"/>',
    tColon: grid + '<path d="M7 5h3v3H7zM7 10h3v3H7z" fill="#3c64d0"/>',
    tX: grid + '<path d="M3 3l10 11M13 3L3 14" stroke="#3c64d0" stroke-width="2"/>',
    tDel: '<path d="M0 4h10v8H0z" fill="#bbb"/><path d="M6 3l9 10M15 3L6 13" stroke="#d22" stroke-width="2.500"/>',
    tDelLeft: '<path d="M8 3h4v10H8z" fill="#bbb"/><path d="M10 8H2M5 5L2 8l3 3" stroke="#d22" stroke-width="2" fill="none"/>',
    tDelRight: '<path d="M3 3h4v10H3z" fill="#bbb"/><path d="M6 8h8M11 5l3 3-3 3" stroke="#d22" stroke-width="2" fill="none"/>',
    yellowHead: '<path d="M.5 1.500h15v13H.5z" fill="#f2f2f2" stroke="#667"/><path d="M1 2h14v6H1z" fill="#f4e838"/><path d="M1 4.500h14M5 2v6M10 2v6" stroke="#887"/>',
    blueRows: '<path d="M.5 1.500h15v13H.5z" fill="#fff" stroke="#667"/><path d="M1 3h14M1 8h14M1 13h14" stroke="#7484e0" stroke-width="3"/><path d="M5 2v12M10 2v12" stroke="#aaa"/>',
    tPencil: grid + '<path d="M6 14L12 3l3 1-6 10z" fill="#f0d850" stroke="#a08820"/>',
    hand: '<path d="M1 6h13v9H1z" fill="#eee" stroke="#333"/><path d="M3 9h9M3 12h9" stroke="#555"/><path d="M3 5l4-4h7v4l-4 3z" fill="#b48860" stroke="#3c2818"/>',
    excel: '<path d="M1 1h14v14H1z" fill="#fff" stroke="#187830" stroke-width="2"/><path d="M5 4l6 8M11 4l-6 8" stroke="#187830" stroke-width="3"/>',
    calc: '<path d="M1 4h14v10H1z" fill="#555" stroke="#222"/><path d="M2 5h12v2H2z" fill="#dde"/><path d="M3 9.500h11M3 12h11" stroke="#eee" stroke-width="1.500" stroke-dasharray="2 1"/>',
    abc: '<path d="M5.500.5h8v5h-8z" fill="#fff" stroke="#222"/><path d="M5 1h9v2H5z" fill="#222"/><text x="0" y="14" font-size="9" font-style="italic" font-weight="bold" font-family="Liberation Serif">ab=</text>',
    fx: '<text x="2" y="12" font-size="14" font-style="italic" fill="#444" font-family="Liberation Serif">fx</text>',
    fxDel: '<text x="5" y="13" font-size="12" font-style="italic" fill="#444" font-family="Liberation Serif">fx</text><path d="M1 1l6 7M7 1L1 8" stroke="#d33" stroke-width="1.500"/>',
    lock: '<path d="M5 7V4q3-4 6 0" fill="none" stroke="#667" stroke-width="2"/><rect x="3" y="7" width="10" height="8" rx="1" fill="#6c94f0" stroke="#3450a0"/>',

    panelOption: '<path d="M1 2h6v9H1z" fill="#fff" stroke="#666"/><path d="M1 2h2v9H1zM6 2h2v9H6z" fill="#654"/><path d="M7 2h6v3" fill="none" stroke="#555" stroke-width="2"/><path d="M8.500 7.500h6v8h-6z" fill="#fff" stroke="#555"/><path d="M10 10h3M10 12h3" stroke="#555"/>',
    panelTab: '<path d="M1 0h14v16H1z" fill="#0f0"/><path d="M1 0l5 9-5 7z" fill="#e02020"/><path d="M1 16l5-7 9 3v4z" fill="#ff0"/><path d="M1 0l5 9-5 7M6 9l9 3" stroke="#222" fill="none"/><rect x="1" y="1" width="14" height="14" fill="none" stroke="#222" stroke-width="2"/>'
};

function icon(name) {
    return `<svg width="16" height="16" viewBox="0 0 16 16">${icons[name]}</svg>`;
}

// "|" separator, "v" drop-down arrow, "*" switched on, "-" disabled
function tools(list) {
    return list.split(' ').map(item => {
        if (item === '|') return '<i class="sep"></i>';
        if (item === 'v') return '<button class="drop" aria-label="Mehr">▼</button>';
        if (item === 'select') return '<select class="case-select" aria-label="Lastfall"></select>';
        const name = item.replace(/^[*-]/, '');
        const state = item[0] === '*' ? 'tool on' : 'tool';
        return `<button class="${state}" aria-label="${name}"${item[0] === '-' ? ' disabled' : ''}>${icon(name)}</button>`;
    }).join('');
}

function fillRow(id, groups) {
    document.getElementById(id).innerHTML = groups
        .map(list => `<div class="toolbar"><i class="grip"></i>${tools(list)}</div>`).join('');
}

fillRow('toolbarTop', [
    'page folder boxOrange boxBlue save notepad print preview | undo redo | selPoly selCircle selRing selPlus selWin | *listView *tableView | newLoad select prev next -showLoad -loadVal -showRes -resVal | glasses abacusWin -abacus',
    'handGrid gridAim *plane1 plane2 plane3 meshPlane nodeWin | copy rotate mirror cross info gearPage gears',
    'modBlue1 modBlue2 modRed1 modRed2'
]);
fillRow('toolbarBottom', [
    'newNode v newLine newMember v newPolyline v | newSupport newLineSupport newSurface | newDim v newComment newGuides | newRect v newOpening v newShell v newSolid newCopy v | flow v newNodalLoad -memberLoad lineLoad surfaceLoad loadWin v',
    'handMove zoomWin zoomX wireCube cubes | viewX viewY viewZ viewMX v render v | solidL v',
    '-frame -tag | iBeam plate solidRes greenArrows sectionRes pick v iBeam2 bricks | *colorList sectionWin v colorTri v'
]);
document.getElementById('tableTools').innerHTML = tools(
    '*tEdit tInsert -tDown -tLine -tWave | tLeft tRight | *jumpBack *jumpFwd -refresh | -tPlus -tStar -tColon | -tX | -tDel -tDelLeft -tDelRight | yellowHead blueRows | -tPencil | hand glasses excel calc | abc fx fxDel | -lock');

document.querySelectorAll('[data-icon]').forEach(el => {
    el.innerHTML = icon(el.dataset.icon);
});

// level, expander (+, - or .), state (x checked, o empty, m mixed), icon, caption
const rows = [
    [2, '.', 'o', 'load', 'Getrennt'],
    [1, '.', 'x', 'load', 'Einwirkungskategorie Vorspannung'],
    [1, '.', 'x', 'load', 'Negative Lasten andersfarbig'],
    [0, '-', 'o', 'result', 'Ergebnisse'],
    [1, '+', 'x', 'result', 'Ergebniswerte'],
    [1, '.', 'x', 'result', 'Kopfzeile-Information'],
    [1, '.', 'x', 'result', 'Max/Min-Info'],
    [1, '+', 'm', 'result', 'Verformung'],
    [1, '+', 'm', 'result', 'Stäbe'],
    [1, '+', 'm', 'result', 'Flächen'],
    [1, '+', 'm', 'result', 'Volumenkörper'],
    [1, '+', 'm', 'result', 'Darstellungsart'],
    [1, '+', 'x', 'result', 'Rippen - Effektive Mitwirkung auf Fläche/Sta'],
    [1, '.', 'x', 'result', 'Ergebnisstäbe'],
    [1, '.', 'o', 'result', 'Verläufe innerhalb Stützenfläche'],
    [1, '+', 'm', 'result', 'Lagerreaktionen'],
    [1, '.', 'o', 'result', 'Transparent'],
    [0, '-', 'x', 'mesh', 'FE-Netz'],
    [1, '+', 'o', 'mesh', 'An Stäben'],
    [1, '.', 'o', 'mesh', 'An Stabergebnissen'],
    [1, '+', 'x', 'mesh', 'An Flächen'],
    [1, '.', 'o', 'mesh', 'An Flächenergebnissen'],
    [1, '+', 'o', 'mesh', 'In Volumenkörpern'],
    [1, '-', 'x', 'mesh', 'FE-Netz-Qualität'],
    [2, '.', 'x', 'mesh', '"OK" Elemente'],
    [2, '+', 'x', 'mesh', '"Warnung" Elemente'],
    [2, '-', 'x', 'mesh', '"Versagen" Elemente'],
    [3, '.', 'x', 'mesh', 'FE-Netz-Qualitätsanmerkungen anze'],
    [2, '.', 'x', 'mesh', 'Flächen'],
    [2, '.', 'x', 'mesh', 'Volumenkörper'],
    [0, '-', 'm', 'section', 'Schnitte'],
    [1, '.', 'x', 'section', 'Bezeichnungen'],
    [1, '.', 'x', 'section', 'Im Vordergrund zeichnen'],
    [1, '.', 'o', 'section', 'Ergebnisverläufe gefüllt'],
    [1, '.', 'x', 'section', 'Schraffur'],
    [1, '.', 'o', 'section', 'Alle Werte'],
    [0, '+', 'x', 'smooth', 'Glättungsbereiche'],
    [0, '-', 'm', 'sign', 'Hilfsobjekte'],
    [1, '+', 'o', 'sign', 'Bemaßungen'],
    [1, '+', 'o', 'sign', 'Kommentare'],
    [1, '+', 'x', 'sign', 'Hilfslinien'],
    [1, '+', 'o', 'sign', 'Linienraster'],
    [1, '.', 'x', 'sign', 'Visuelle Objekte'],
    [1, '+', 'o', 'sign', 'Hintergrund-Folien'],
    [0, '-', 'm', 'blocks', 'Allgemein'],
    [1, '+', 'o', 'blocks', 'Raster'],
    [1, '+', 'x', 'blocks', 'Koordinateninfo am Mauszeiger'],
    [1, '+', 'o', 'blocks', 'Achsensystem'],
    [1, '.', 'x', 'blocks', 'Verborgenes im Hintergrund darstellen'],
    [1, '+', 'o', 'blocks', 'Schwerpunkt'],
    [0, '-', 'o', 'numbers', 'Nummerierung'],
    [1, '.', 'x', 'numbers', 'Knoten'],
    [1, '.', 'x', 'numbers', 'Linien'],
    [1, '+', 'x', 'numbers', 'Flächen']
];

// does the branch at this level go on below row i?
function goesOn(i, level) {
    for (let k = i + 1; k < rows.length; k++) {
        if (rows[k][0] < level) return false;
        if (rows[k][0] === level) return true;
    }
    return true;
}

document.getElementById('tree').innerHTML = rows.map(([level, exp, state, ico, caption], i) => {
    let guides = '';
    for (let l = 0; l < level; l++) {
        guides += `<span class="guide${goesOn(i, l) ? ' line' : ''}"></span>`;
    }
    const knob = exp === '.' ? '' : `<button class="expander${exp === '+' ? ' plus' : ''}" aria-label="${caption.replace(/"/g, '')}"></button>`;
    guides += `<span class="guide branch${goesOn(i, level) ? '' : ' last'}">${knob}</span>`;
    const box = `<input type="checkbox"${state === 'x' ? ' checked' : ''}${state === 'm' ? ' class="mixed"' : ''}>`;
    return `<div class="row">${guides}<label>${box}${icon(ico)}<span class="caption${i === 0 ? ' selected' : ''}">${caption}</span></label></div>`;
}).join('');
```
